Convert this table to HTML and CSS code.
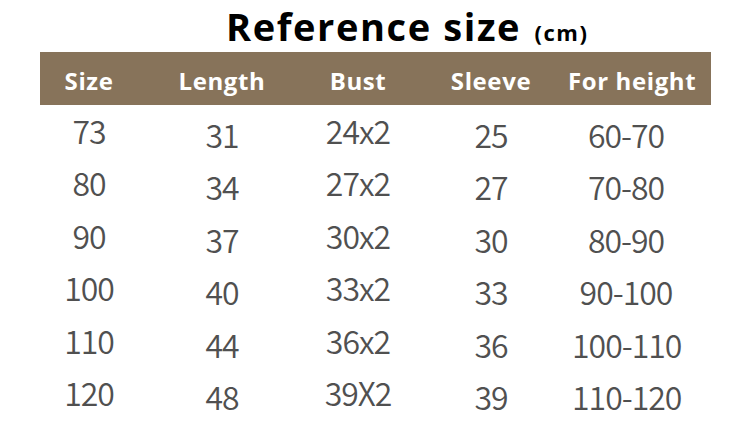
FILE: index.html
```html
<!DOCTYPE html>
<html>
<head>
<meta charset="utf-8">
<link rel="stylesheet" href="styles.css">
</head>
<body>
<div class="page">
  <h1 class="title">Reference size <span class="unit">(cm)</span></h1>
  <div class="table">
    <div class="row head">
      <div class="cell">Size</div>
      <div class="cell">Length</div>
      <div class="cell">Bust</div>
      <div class="cell">Sleeve</div>
      <div class="cell">For height</div>
    </div>
    <div class="row">
      <div class="cell">73</div><div class="cell">31</div><div class="cell">24x2</div><div class="cell">25</div><div class="cell">60-70</div>
    </div>
    <div class="row">
      <div class="cell">80</div><div class="cell">34</div><div class="cell">27x2</div><div class="cell">27</div><div class="cell">70-80</div>
    </div>
    <div class="row">
      <div class="cell">90</div><div class="cell">37</div><div class="cell">30x2</div><div class="cell">30</div><div class="cell">80-90</div>
    </div>
    <div class="row">
      <div class="cell">100</div><div class="cell">40</div><div class="cell">33x2</div><div class="cell">33</div><div class="cell">90-100</div>
    </div>
    <div class="row">
      <div class="cell">110</div><div class="cell">44</div><div class="cell">36x2</div><div class="cell">36</div><div class="cell">100-110</div>
    </div>
    <div class="row">
      <div class="cell">120</div><div class="cell">48</div><div class="cell">39X2</div><div class="cell">39</div><div class="cell">110-120</div>
    </div>
  </div>
</div>
</body>
</html>
```
FILE: styles.css
```css
html, body {
  margin: 0;
  padding: 0;
  background: #fff;
}
.page {
  width: 750px;
  height: 442px;
  overflow: hidden;
}
.title {
  margin: 0;
  height: 52px;
  padding-left: 226px;
  font-family: "Open Sans", "Liberation Sans", sans-serif;
  font-weight: 700;
  font-size: 38px;
  letter-spacing: 1.6px;
  line-height: 52px;
  color: #000;
  white-space: nowrap;
}
.unit {
  font-size: 22px;
  letter-spacing: 1.5px;
  margin-left: 2px;
}
.table {
  margin-left: 40px;
  width: 671px;
}
.row {
  display: grid;
  grid-template-columns: 98px 168px 104px 162px 108px;
  height: 52.4px;
  font-family: "Noto Sans CJK SC", "Noto Sans", sans-serif;
  font-weight: 350;
  font-size: 32px;
  letter-spacing: -1px;
  line-height: 40px;
  color: #505050;
}
.row .cell {
  text-align: center;
  white-space: nowrap;
  padding-top: 5px;
}
.row .cell:nth-child(2),
.row .cell:nth-child(4),
.row .cell:nth-child(5) {
  padding-top: 9px;
}
.row.head {
  height: 53px;
  background: #87735a;
  color: #fff;
  font-family: "Open Sans", "Liberation Sans", sans-serif;
  font-weight: 700;
  font-size: 24px;
  letter-spacing: 0.6px;
  line-height: 46px;
}
.row.head .cell {
  padding-top: 6px;
}
.row.head .cell:nth-child(5) {
  padding-top: 6px;
  margin-left: -4px;
  margin-right: -16px;
}
```
